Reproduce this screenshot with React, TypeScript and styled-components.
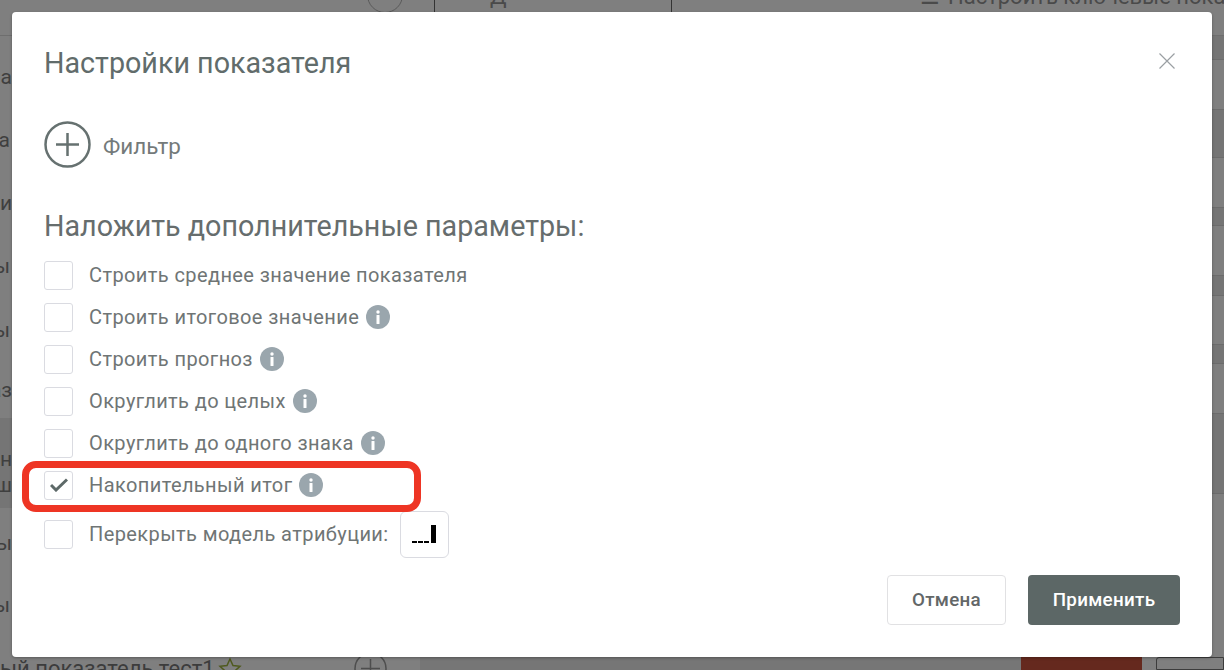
import React from "react";
import styled, { createGlobalStyle } from "styled-components";

const Global = createGlobalStyle`
  html, body { margin: 0; padding: 0; height: 100%; overflow: hidden; background: #7f7f7f; }
  body { font-family: Roboto, "Liberation Sans", sans-serif; }
`;

const Page = styled.div`
  position: relative;
  width: 1224px;
  height: 670px;
  overflow: hidden;
  background: #7f7f7f;
  display: flex;
  flex-direction: column;
`;

const TopBar = styled.div`
  height: 36px;
  flex: none;
  display: flex;
  border-bottom: 1px solid #6e6e6e;
  box-sizing: border-box;
  color: #4a4a4a;
  font-size: 22px;
  overflow: hidden;
`;
const TopCell = styled.div<{ $w?: number; $pad?: number }>`
  width: ${(p) => (p.$w ? `${p.$w}px` : "auto")};
  flex: ${(p) => (p.$w ? "none" : "1")};
  border-right: ${(p) => (p.$w ? "1px solid #333" : "none")};
  box-sizing: border-box;
  display: flex;
  align-items: flex-start;
  padding-left: ${(p) => p.$pad ?? 0}px;
  white-space: nowrap;
  min-width: 0;
  overflow: hidden;
`;
const TopText = styled.span`
  margin-top: -12px;
  line-height: 18px;
`;
const TopIcon = styled.span`
  margin-right: 8px;
`;
const TopCircle = styled.div`
  width: 36px;
  height: 36px;
  flex: none;
  box-sizing: border-box;
  border: 1.5px solid #5a5a5a;
  border-radius: 50%;
  margin-top: -23px;
`;

const Body = styled.div`
  flex: 1;
  display: flex;
`;
const LeftCol = styled.div`
  width: 12px;
  flex: none;
  display: flex;
  flex-direction: column;
`;
const SideRow = styled.div<{ $h: number; $dark?: boolean; $inset?: number }>`
  height: ${(p) => p.$h}px;
  flex: none;
  display: flex;
  flex-direction: column;
  justify-content: center;
  align-items: flex-end;
  box-sizing: border-box;
  padding-top: ${(p) => (p.$dark ? 18 : 0)}px;
  padding-right: ${(p) => p.$inset ?? 0}px;
  background: ${(p) => (p.$dark ? "#757575" : "transparent")};
  color: #3f3f3f;
  font-size: 21px;
  line-height: 26px;
  white-space: nowrap;
  overflow: hidden;
`;
const Spacer = styled.div`
  flex: 1;
`;
const RightCol = styled.div`
  width: 12px;
  flex: none;
  display: flex;
  flex-direction: column;
`;
const Band = styled.div<{ $h: number; $dark?: boolean }>`
  height: ${(p) => p.$h}px;
  flex: none;
  box-sizing: border-box;
  border-bottom: 1px solid #6c6c6c;
  background: ${(p) => (p.$dark ? "#757575" : "transparent")};
`;

const Backlayer = styled.div`
  position: absolute;
  left: 0;
  right: 0;
  bottom: 0;
  height: 13px;
  display: flex;
  align-items: flex-start;
  color: #3c3c3c;
  font-size: 22px;
  line-height: 24px;
`;
const BackLabel = styled.div`
  width: 354px;
  display: flex;
  align-items: flex-start;
  gap: 3px;
  white-space: nowrap;
  flex: none;
`;
const BackPlus = styled.svg`
  width: 33px;
  height: 33px;
  flex: none;
  margin-top: -5px;
  color: #4e4e4e;
`;
const BackMiddle = styled.div`
  width: 601px;
  height: 13px;
  margin-left: 33px;
  background: #767676;
  flex: none;
`;
const BackRed = styled.div`
  width: 121px;
  height: 13px;
  background: #65291e;
  flex: none;
`;
const BackOutline = styled.div`
  width: 68px;
  height: 13px;
  margin-left: 14px;
  box-sizing: border-box;
  border: 1px solid #3c3c3c;
  border-radius: 3px 0 0 0;
  flex: none;
`;

const Modal = styled.div`
  position: absolute;
  left: 12px;
  top: 12px;
  width: 1200px;
  height: 645px;
  box-sizing: border-box;
  background: #fff;
  border-radius: 4px;
  box-shadow: 0 1px 3px rgba(0, 0, 0, 0.3);
  padding: 33px 32px 32px 32px;
  display: flex;
  flex-direction: column;
  color: #636c6c;
`;
const Header = styled.div`
  display: flex;
  justify-content: space-between;
  align-items: flex-start;
`;
const Title = styled.h2`
  margin: 0;
  font-size: 28.7px;
  line-height: 36px;
  font-weight: 400;
  color: #616c6b;
`;
const Close = styled.svg`
  width: 18px;
  height: 18px;
  margin: 7px 4px 0 0;
  color: #9a9fa3;
`;
const FilterRow = styled.div`
  display: flex;
  align-items: center;
  gap: 12px;
  margin-top: 40px;
`;
const PlusIcon = styled.svg`
  width: 47px;
  height: 47px;
  flex: none;
  color: #667170;
`;
const FilterText = styled.span`
  font-size: 22.4px;
  padding-top: 3px;
  color: #747a7a;
`;
const Heading = styled.div`
  margin-top: 40px;
  font-size: 28.7px;
  line-height: 36px;
  color: #666d6d;
`;
const Options = styled.div`
  display: flex;
  flex-direction: column;
  margin-top: 10px;
`;
const Option = styled.div<{ $h?: number }>`
  height: ${(p) => p.$h ?? 42}px;
  display: flex;
  align-items: center;
  flex: none;
`;
const Box = styled.div`
  width: 29px;
  height: 29px;
  flex: none;
  box-sizing: border-box;
  border: 1px solid #dadbe1;
  border-radius: 3px;
  margin-right: 16px;
  display: flex;
  align-items: center;
  justify-content: center;
  color: #5d6968;
`;
const Label = styled.span`
  font-size: 20px;
  letter-spacing: 0.4px;
  color: #6f7575;
  white-space: nowrap;
`;
const Info = styled.svg`
  width: 24px;
  height: 24px;
  margin-left: 7px;
  flex: none;
`;
const Highlight = styled.div`
  position: absolute;
  left: 10px;
  top: 449px;
  width: 399px;
  height: 51px;
  box-sizing: border-box;
  border: 7px solid #ee3524;
  border-radius: 14px;
  pointer-events: none;
`;
const AttrButton = styled.div`
  width: 49px;
  height: 47px;
  box-sizing: border-box;
  margin-left: 11px;
  border: 1px solid #dadbe1;
  border-radius: 6px;
  background: #fff;
  display: flex;
  align-items: center;
  justify-content: center;
  flex: none;
`;
const Footer = styled.div`
  margin-top: auto;
  display: flex;
  justify-content: flex-end;
  gap: 22px;
`;
const Btn = styled.button<{ $primary?: boolean }>`
  height: 50px;
  width: ${(p) => (p.$primary ? 152 : 119)}px;
  border-radius: 4px;
  box-sizing: border-box;
  font-family: Roboto, sans-serif;
  font-size: 18.8px;
  font-weight: 500;
  letter-spacing: 0.3px;
  border: ${(p) => (p.$primary ? "none" : "1px solid #e1e1e3")};
  background: ${(p) => (p.$primary ? "#5c6766" : "#fff")};
  color: ${(p) => (p.$primary ? "#fff" : "#636768")};
  padding: 0;
`;

const InfoIcon = () => (
  <Info viewBox="0 0 24 24">
    <circle cx="12" cy="12" r="12" fill="#9aa6ad" />
    <circle cx="12" cy="7" r="1.7" fill="#fff" />
    <rect x="10.500" y="10" width="3" height="9" rx="0.5" fill="#fff" />
  </Info>
);

const rows: { t: string; info?: boolean }[] = [
  { t: "Строить среднее значение показателя" },
  { t: "Строить итоговое значение", info: true },
  { t: "Строить прогноз", info: true },
  { t: "Округлить до целых", info: true },
  { t: "Округлить до одного знака", info: true },
];

export default function App() {
  return (
    <Page>
      <Global />
      <TopBar>
        <TopCell $w={435} $pad={367}>
          <TopCircle />
        </TopCell>
        <TopCell $w={237} $pad={55}>
          <TopText>Д</TopText>
        </TopCell>
        <TopCell $pad={248}>
          <TopText>
            <TopIcon>☰</TopIcon>Настроить ключевые показатели
          </TopText>
        </TopCell>
      </TopBar>
      <Body>
        <LeftCol>
          <SideRow $h={10} />
          <SideRow $h={62}>ра</SideRow>
          <SideRow $h={64} $inset={2}>а</SideRow>
          <SideRow $h={62}>ди</SideRow>
          <SideRow $h={64} $inset={2}>ы</SideRow>
          <SideRow $h={64} $inset={2}>ы</SideRow>
          <SideRow $h={56}>аз</SideRow>
          <SideRow $h={90} $dark>
            <span>н</span>
            <span>ш</span>
          </SideRow>
          <SideRow $h={70}>ы</SideRow>
          <SideRow $h={54} $inset={2}>ы</SideRow>
          <Spacer />
        </LeftCol>
        <Spacer />
        <RightCol>
          <Band $h={24} $dark />
          <Band $h={50} />
          <Band $h={48} $dark />
          <Band $h={50} />
          <Band $h={18} $dark />
          <Band $h={50} />
          <Band $h={20} $dark />
          <Band $h={49} />
          <Band $h={19} $dark />
          <Band $h={50} />
          <Band $h={80} $dark />
          <Spacer />
        </RightCol>
      </Body>
      <Backlayer>
        <BackLabel>
          ый показатель тест1
          <svg width="24" height="24" viewBox="0 0 24 24" fill="none" stroke="#4f5a1e" strokeWidth="1.5">
            <path d="M12 2l3 6.500 7 .8-5.200 4.700 1.500 7L12 17.500 5.700 21l1.500-7L2 9.300l7-.8z" />
          </svg>
        </BackLabel>
        <BackPlus viewBox="0 0 33 33" fill="none" stroke="currentColor" strokeWidth="1.5">
          <circle cx="16.500" cy="16.500" r="15.500" />
          <path d="M16.500 7v19M7 16.500h19" />
        </BackPlus>
        <BackMiddle />
        <BackRed />
        <BackOutline />
      </Backlayer>
      <Modal>
        <Header>
          <Title>Настройки показателя</Title>
          <Close viewBox="0 0 18 18" fill="none" stroke="currentColor" strokeWidth="1.2">
            <path d="M1.500 1.500l15 15M16.500 1.500l-15 15" />
          </Close>
        </Header>
        <FilterRow>
          <PlusIcon viewBox="0 0 47 47" fill="none" stroke="currentColor">
            <circle cx="23.500" cy="23.500" r="22" strokeWidth="2.500" />
            <path d="M23.500 12v23M12 23.500h23" strokeWidth="2.500" />
          </PlusIcon>
          <FilterText>Фильтр</FilterText>
        </FilterRow>
        <Heading>Наложить дополнительные параметры:</Heading>
        <Options>
          {rows.map((r) => (
            <Option key={r.t}>
              <Box />
              <Label>{r.t}</Label>
              {r.info && <InfoIcon />}
            </Option>
          ))}
          <Option>
            <Box>
              <svg width="18" height="14" viewBox="0 0 18 14" fill="none" stroke="currentColor" strokeWidth="3">
                <path d="M1 7l5 5L17 1.500" />
              </svg>
            </Box>
            <Label>Накопительный итог</Label>
            <InfoIcon />
          </Option>
          <Option $h={56}>
            <Box />
            <Label>Перекрыть модель атрибуции:</Label>
            <AttrButton>
              <svg width="24" height="18" viewBox="0 0 24 18" fill="#000">
                <rect x="0" y="16" width="5" height="2" />
                <rect x="6" y="16" width="5" height="2" />
                <rect x="12" y="16" width="5" height="2" />
                <rect x="19" y="0" width="5" height="18" />
              </svg>
            </AttrButton>
          </Option>
        </Options>
        <Footer>
          <Btn>Отмена</Btn>
          <Btn $primary>Применить</Btn>
        </Footer>
        <Highlight />
      </Modal>
    </Page>
  );
}
